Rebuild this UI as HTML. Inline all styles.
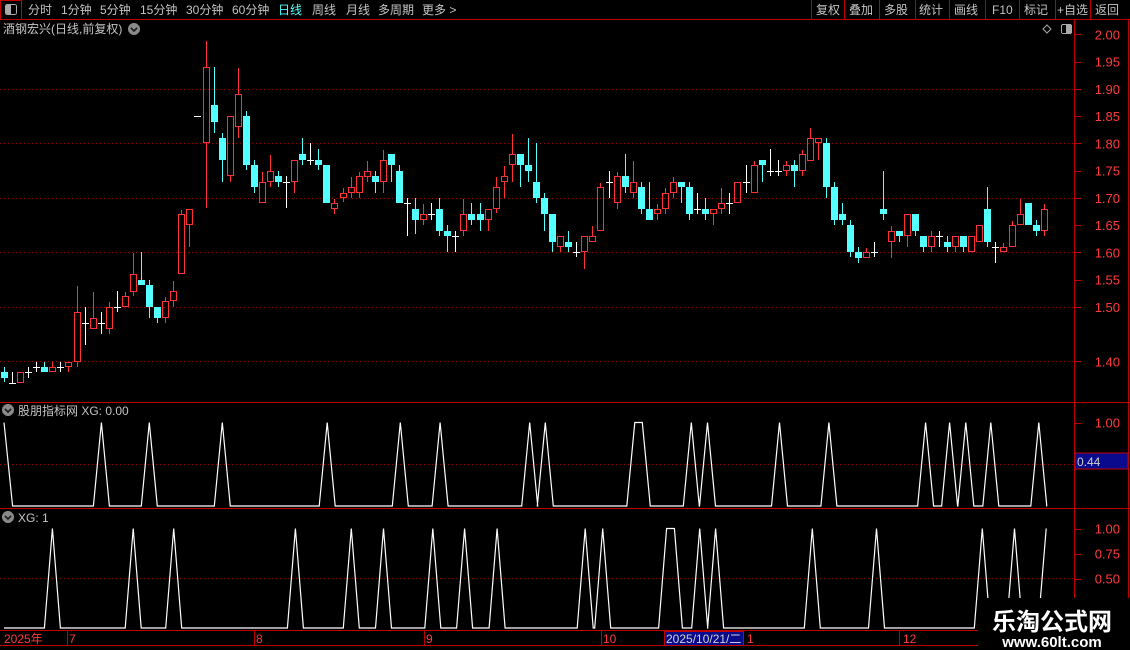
<!DOCTYPE html>
<html><head><meta charset="utf-8">
<style>
html,body{margin:0;padding:0;background:#000;width:1130px;height:650px;overflow:hidden}
svg{display:block}
text{font-family:"Liberation Sans","Noto Sans CJK SC",sans-serif}
</style></head>
<body>
<svg id="s" width="1130" height="650" viewBox="0 0 1130 650" xmlns="http://www.w3.org/2000/svg" shape-rendering="crispEdges">
<rect width="1130" height="650" fill="#000"/>
<!-- toolbar -->
<g font-size="12" fill="#c4c4c4">
<text x="28" y="14">分时</text><text x="61" y="14">1分钟</text><text x="100" y="14">5分钟</text>
<text x="140" y="14">15分钟</text><text x="186" y="14">30分钟</text><text x="232" y="14">60分钟</text>
<text x="278" y="14" fill="#54ffff">日线</text><text x="312" y="14">周线</text><text x="346" y="14">月线</text>
<text x="378" y="14">多周期</text><text x="422" y="14">更多 &gt;</text>
<text x="816" y="14">复权</text><text x="849" y="14">叠加</text><text x="884" y="14">多股</text>
<text x="919" y="14">统计</text><text x="954" y="14">画线</text><text x="992" y="14">F10</text>
<text x="1024" y="14">标记</text><text x="1057" y="14">+自选</text><text x="1095" y="14">返回</text>
</g>
<rect x="0.5" y="0.5" width="21" height="19" fill="none" stroke="#c00000"/>
<rect x="5.5" y="4.5" width="11" height="10" rx="2" fill="none" stroke="#aaa"/>
<rect x="6" y="5" width="5" height="9" fill="#aaa"/>
<g stroke="#c00000">
<line x1="0" y1="19.5" x2="1130" y2="19.5"/>
<line x1="811.5" y1="0" x2="811.5" y2="19"/><line x1="844.5" y1="0" x2="844.5" y2="19"/>
<line x1="879.5" y1="0" x2="879.5" y2="19"/><line x1="915.5" y1="0" x2="915.5" y2="19"/>
<line x1="949.5" y1="0" x2="949.5" y2="19"/><line x1="985.5" y1="0" x2="985.5" y2="19"/>
<line x1="1019.5" y1="0" x2="1019.5" y2="19"/><line x1="1055.5" y1="0" x2="1055.5" y2="19"/>
<line x1="1090.5" y1="0" x2="1090.5" y2="19"/>
<line x1="1074.5" y1="19" x2="1074.5" y2="646"/>
<line x1="1128.5" y1="19" x2="1128.5" y2="600"/>
<line x1="0" y1="402.5" x2="1130" y2="402.5"/>
<line x1="0" y1="508.5" x2="1130" y2="508.5"/>
<line x1="0" y1="630.5" x2="980" y2="630.5"/>
<line x1="0" y1="645.5" x2="980" y2="645.5"/>
</g>
<!-- title -->
<text x="3" y="33" font-size="12" fill="#c4c4c4">酒钢宏兴(日线,前复权)</text>
<circle cx="134" cy="29" r="6" fill="#8a8a8a"/><path d="M131 28 L134 31 L137 28" stroke="#222" stroke-width="1.5" fill="none"/>
<path d="M1047 25 L1051 29 L1047 33 L1043 29 Z" fill="none" stroke="#aaa" shape-rendering="auto"/>
<rect x="1061.5" y="24.5" width="10" height="9" rx="1.5" fill="none" stroke="#aaa"/><rect x="1066" y="25" width="5" height="8" fill="#aaa"/>
<!-- sub titles -->
<circle cx="8" cy="410" r="6" fill="#8a8a8a"/><path d="M5 409 L8 412 L11 409" stroke="#222" stroke-width="1.5" fill="none"/>
<text x="18" y="415" font-size="12" fill="#c4c4c4">股朋指标网 XG: 0.00</text>
<circle cx="8" cy="517" r="6" fill="#8a8a8a"/><path d="M5 516 L8 519 L11 516" stroke="#222" stroke-width="1.5" fill="none"/>
<text x="18" y="522" font-size="12" fill="#c4c4c4">XG: 1</text>
<g id="grid" stroke="#9a0000" stroke-dasharray="1 3"></g>
<g id="axis" font-size="13" fill="#ff3a3a" text-anchor="end"></g>
<g id="candles"></g>
<g id="ind" fill="none" stroke="#fff" stroke-width="1.2" shape-rendering="auto"></g>
<!-- 0.44 box -->
<rect x="1075" y="453" width="53" height="16" fill="#0a0a8c" stroke="#c00000"/>
<text x="1077" y="466" font-size="12" fill="#d0d0d0">0.44</text>
<!-- date axis -->
<g font-size="12" fill="#ff3a3a">
<text x="4" y="643">2025年</text><text x="69" y="643">7</text><text x="256" y="643">8</text>
<text x="426" y="643">9</text><text x="603" y="643">10</text><text x="747" y="643">1</text><text x="903" y="643">12</text>
</g>
<g stroke="#c00000">
<line x1="67.5" y1="631" x2="67.5" y2="645"/><line x1="254.5" y1="631" x2="254.5" y2="645"/>
<line x1="424.5" y1="631" x2="424.5" y2="645"/><line x1="601.5" y1="631" x2="601.5" y2="645"/>
<line x1="743.5" y1="631" x2="743.5" y2="645"/><line x1="899.5" y1="631" x2="899.5" y2="645"/>
</g>
<rect x="664.5" y="631.5" width="79" height="14" fill="#0a0a8c" stroke="#c00000"/>
<text x="666" y="643" font-size="12" fill="#d0d0d0">2025/10/21/二</text>
<!-- watermark -->
<rect x="978" y="598" width="152" height="52" fill="#000"/>
<text x="1052" y="630" font-size="24" font-weight="bold" fill="#fff" text-anchor="middle" font-family="'Noto Serif CJK SC','Liberation Serif',serif">乐淘公式网</text>
<text x="1052" y="647" font-size="15" font-weight="bold" fill="#fff" text-anchor="middle" font-family="'Liberation Serif',serif">www.60lt.com</text>
</svg>
<script>
var NS="http://www.w3.org/2000/svg";
function el(p,t,a){var e=document.createElementNS(NS,t);for(var k in a)e.setAttribute(k,a[k]);p.appendChild(e);return e;}
var grid=document.getElementById('grid'),axis=document.getElementById('axis');
function py(p){return 34.3+(2.0-p)*545;}
[1.9,1.8,1.7,1.6,1.5,1.4].forEach(function(p){var y=Math.round(py(p))+0.5;el(grid,'line',{x1:0,y1:y,x2:1073,y2:y});});
el(grid,'line',{x1:0,y1:464.5,x2:1073,y2:464.5});
el(grid,'line',{x1:0,y1:578.5,x2:1073,y2:578.5});
var labs=[2.0,1.95,1.9,1.85,1.8,1.75,1.7,1.65,1.6,1.55,1.5,1.4];
labs.forEach(function(p){var y=py(p);var t=el(axis,'text',{x:1120,y:y+5});t.textContent=p.toFixed(2);
 el(axis,'line',{x1:1075,y1:Math.round(y)+0.5,x2:1081,y2:Math.round(y)+0.5,stroke:'#c00000'});});
[[1.0,422.5],[1.0,528.5],[0.75,553.5],[0.5,578.5]].forEach(function(a){var t=el(axis,'text',{x:1120,y:a[1]+5});t.textContent=a[0].toFixed(2);
 el(axis,'line',{x1:1075,y1:Math.round(a[1])+0.5,x2:1081,y2:Math.round(a[1])+0.5,stroke:'#c00000'});});
var D=[
['c',367,382,372,378],['w',372,383,383],['r',372,383,372,383],['w',367,378,372],['w',362,372,367],
['c',362,372,367,372],['r',362,372,367,372],['w',362,372,367],['r',362,372,362,367],['r',286,367,312,362],
['w',307,345,323],['r',292,329,318,329],['w',312,334,323],['r',302,334,307,329],['w',291,312,307],
['r',292,307,296,307],['r',253,296,274,292],['c',252,285,280,285],['c',280,318,285,307],['c',307,323,307,318],
['r',297,323,301,318],['r',281,307,291,301],['r',210,274,214,274],['r',209,247,209,225],['d',116],
['r',41,208,67,143],['c',67,133,105,122],['c',133,182,138,160],['r',116,182,116,176],['r',68,138,94,127],
['c',111,170,116,165],['c',160,193,165,187],['r',172,203,182,203],['r',155,187,171,182],['c',171,187,176,182],
['w',176,208,182],['r',160,193,160,182],['c',138,165,154,160],['w',143,165,160],['c',149,170,160,165],
['c',165,203,165,203],['r',199,214,203,209],['r',188,202,193,198],['r',177,198,187,193],['r',172,198,176,193],
['r',161,182,171,177],['c',171,193,176,182],['r',150,193,160,182],['c',154,182,154,165],['c',165,203,171,203],
['w',198,236,203],['c',198,234,209,220],['r',204,225,214,220],['w',203,220,214],['c',198,236,209,231],
['c',225,252,231,236],['w',231,252,236],['r',199,236,214,231],['c',203,225,214,220],['c',203,231,214,220],
['r',209,231,209,220],['r',177,213,187,209],['r',166,198,176,182],['r',134,182,154,165],['c',154,187,154,165],
['c',138,182,165,171],['c',143,203,182,198],['c',193,231,198,214],['c',214,252,214,242],['r',236,252,236,247],
['c',231,252,242,247],['w',242,257,252],['r',236,269,236,252],['r',226,242,236,242],['r',183,231,187,231],
['w',171,198,182],['r',172,209,176,203],['c',154,193,176,187],['r',161,198,182,193],['c',182,214,187,209],
['c',182,220,209,220],['r',204,220,209,214],['r',188,214,193,209],['r',177,198,182,193],['c',182,203,182,187],
['c',182,220,187,214],['w',193,214,209],['c',198,220,209,214],['r',209,225,209,214],['r',188,214,203,209],
['w',193,214,203],['r',182,203,182,203],['w',165,193,182],['r',161,193,165,193],['c',160,182,160,165],
['w',149,176,171],['w',160,176,171],['r',161,176,165,171],['c',160,187,165,171],['r',150,176,154,171],
['r',128,161,138,161],['r',138,160,138,143],['c',138,198,143,187],['c',182,225,187,220],['c',203,225,214,220],
['c',220,257,225,252],['c',247,263,252,258],['r',248,258,252,258],['w',242,257,252],['c',171,220,209,214],
['r',226,258,231,242],['c',231,242,231,236],['r',214,247,214,236],['c',214,236,214,231],['c',236,252,236,247],
['r',231,252,236,247],['w',231,247,236],['c',236,252,242,247],['r',236,252,236,247],['c',236,252,236,247],
['r',236,252,236,252],['r',225,242,225,242],['c',187,247,209,242],['w',242,263,247],['r',243,252,247,252],
['r',221,247,225,247],['r',199,225,214,225],['c',203,225,203,225],['c',220,236,225,231],['r',204,236,209,231]];
var cg=document.getElementById('candles');
var RED='#ff3232',CY='#54ffff',WH='#ffffff';
D.forEach(function(d,k){
 var cx=Math.round(4+8.06*k);var lx=cx+0.5;
 if(d[0]=='d'){el(cg,'line',{x1:cx-3,y1:d[1]+0.5,x2:cx+4,y2:d[1]+0.5,stroke:WH});return;}
 if(d[0]=='w'){el(cg,'line',{x1:lx,y1:d[1],x2:lx,y2:d[2],stroke:WH});el(cg,'line',{x1:cx-3,y1:d[3]+0.5,x2:cx+4,y2:d[3]+0.5,stroke:WH});return;}
 var col=d[0]=='r'?RED:CY;var bt=d[3],bb=d[4];if(bb-bt<2)bb=bt+2;
 if(d[1]<bt)el(cg,'line',{x1:lx,y1:d[1],x2:lx,y2:bt,stroke:col});
 if(d[2]>bb)el(cg,'line',{x1:lx,y1:bb,x2:lx,y2:d[2],stroke:col});
 if(d[0]=='r')el(cg,'rect',{x:cx-2.5,y:bt+0.5,width:6,height:bb-bt-1,fill:'none',stroke:col});
 else el(cg,'rect',{x:cx-3,y:bt,width:7,height:bb-bt,fill:col});
});
var ig=document.getElementById('ind');
function build(start,peaks,y0,y1,end){var pts=start.slice();
 peaks.forEach(function(p){if(typeof p=='number'){pts.push([p-8,y0],[p,y1],[p+8,y0]);}else{pts.push([p[0]-8,y0],[p[0],y1],[p[1],y1],[p[1]+8,y0]);}});
 if(end)pts.push(end);
 el(ig,'polyline',{points:pts.map(function(a){return a[0].toFixed(1)+','+a[1];}).join(' ')});}
build([[4,422.5],[12.6,506]],[101.4,149.3,222.3,327.2,400.3,440.1,529.7,545.3,[634.8,642.3],691.3,707.5,779.5,828.9,925.6,949.6,965.8,990.8,1038.8],506,422.5,[1047,506]);
el(ig,'line',{x1:12.6,y1:506,x2:12.6,y2:506});
build([[4,628]],[52.4,133.2,173.7,295.4,351.3,383.5,432.8,464.6,497.1,585.2,602.7,[666.6,674.4],699.7,715.6,812.3,876.5,982.3,1014.5],628,528.5,[1038,628]);
el(ig,'polyline',{points:'1038,628 1046.2,528.5'});
var pls=ig.getElementsByTagName('polyline');
</script>
<script>
// bring watermark above lines
var s=document.getElementById('s');var kids=s.children;var n=kids.length;
for(var i=n-3;i<n;i++){}
var wm=[];for(var i=0;i<kids.length;i++){var c=kids[i];if((c.tagName=='rect'&&c.getAttribute('x')=='978')||(c.tagName=='text'&&(c.textContent=='乐淘公式网'||c.textContent=='www.60lt.com')))wm.push(c);}
wm.forEach(function(c){s.appendChild(c);});
</script>
</body></html>
